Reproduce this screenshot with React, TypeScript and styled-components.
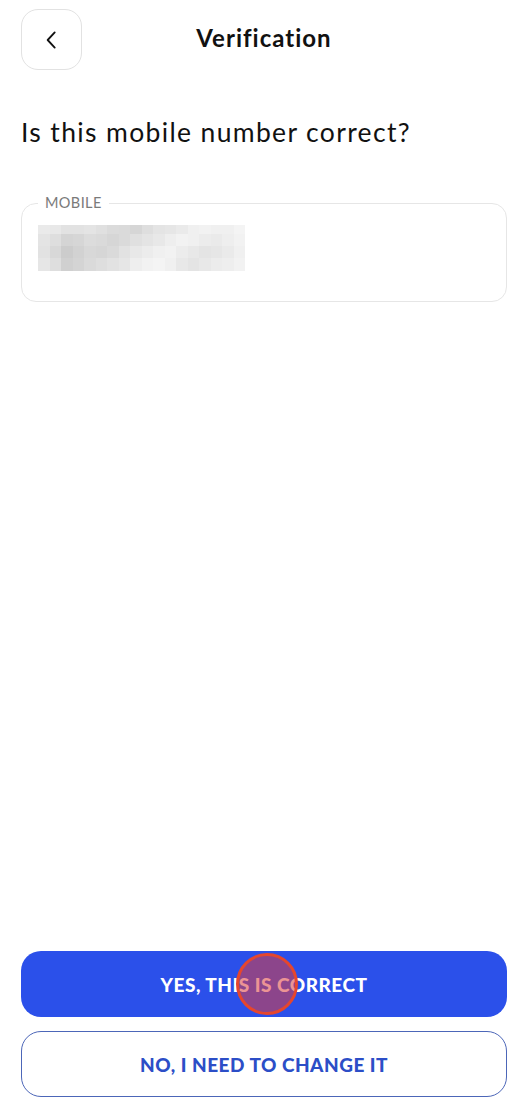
import * as React from "react";
import styled, { createGlobalStyle } from "styled-components";

const GlobalStyle = createGlobalStyle`
  html, body {
    margin: 0;
    padding: 0;
    background: #ffffff;
  }
  body {
    font-family: "Lato", "Open Sans", sans-serif;
    color: #111111;
  }
`;

const Screen = styled.div`
  width: 528px;
  height: 1118px;
  display: flex;
  flex-direction: column;
  padding: 9px 21px 21px;
  box-sizing: border-box;
  background: #ffffff;
`;

const Header = styled.div`
  position: relative;
  display: flex;
  align-items: center;
  height: 61px;
`;

const BackButton = styled.button`
  width: 61px;
  height: 61px;
  border: 1px solid #e2e2e2;
  border-radius: 17px;
  background: #ffffff;
  display: flex;
  align-items: center;
  justify-content: center;
  padding: 0;
`;

const Title = styled.h1`
  position: absolute;
  left: 0;
  right: 0;
  top: 14px;
  margin: 0;
  text-align: center;
  font-size: 24px;
  line-height: 30px;
  font-weight: 700;
  letter-spacing: 1px;
  pointer-events: none;
`;

const Question = styled.h2`
  margin: 46px 0 0;
  font-size: 26.5px;
  font-weight: 400;
  line-height: 32px;
  letter-spacing: 1.35px;
  color: #111111;
`;

const Field = styled.fieldset`
  margin: 48px 0 0;
  padding: 0 16px 0 16px;
  height: 106px;
  box-sizing: border-box;
  border: 1.5px solid #e6e6e6;
  border-radius: 15px;
  min-width: 0;
`;

const Legend = styled.legend`
  padding: 0 7px;
  margin-left: 0;
  font-size: 14.5px;
  letter-spacing: 0.4px;
  color: #7a7a7a;
  line-height: 14px;
`;

const Pixelated = styled.div`
  margin-top: 15px;
  display: grid;
  grid-template-columns: repeat(18, 11.5px);
  grid-template-rows: 9px 12px 12px 13px;
  width: fit-content;
`;

const Cell = styled.div<{ $shade: number }>`
  background: ${(p) => `rgb(${p.$shade}, ${p.$shade}, ${p.$shade})`};
`;

const Spacer = styled.div`
  flex: 1;
`;

const Actions = styled.div`
  display: flex;
  flex-direction: column;
  gap: 14px;
`;

const ActionButton = styled.button<{ $primary?: boolean }>`
  position: relative;
  height: 66px;
  border-radius: 20px;
  font-family: "Lato", "Open Sans", sans-serif;
  font-size: 19px;
  font-weight: 900;
  letter-spacing: 0.5px;
  cursor: pointer;
  background: ${(p) => (p.$primary ? "#2b50ea" : "#ffffff")};
  color: ${(p) => (p.$primary ? "#ffffff" : "#2c4ec7")};
  border: ${(p) => (p.$primary ? "none" : "1.5px solid #4c66b8")};
`;

const TapMarker = styled.span`
  position: absolute;
  left: 215px;
  top: 2px;
  width: 62px;
  height: 62px;
  border-radius: 50%;
  border: 3px solid #e5462e;
  box-sizing: border-box;
  background: rgba(220, 60, 60, 0.55);
`;

const shades = [
  [234, 232, 226, 226, 228, 224, 219, 218, 214, 222, 228, 230, 234, 240, 242, 240, 240, 244],
  [228, 222, 212, 214, 220, 218, 214, 218, 224, 228, 232, 238, 242, 240, 236, 234, 238, 242],
  [226, 216, 204, 210, 216, 214, 218, 226, 232, 236, 240, 242, 236, 232, 228, 230, 234, 240],
  [230, 222, 208, 212, 218, 222, 226, 230, 238, 242, 244, 240, 232, 228, 232, 236, 238, 242],
];

const ChevronLeft = () => (
  <svg width="26" height="26" viewBox="0 0 24 24" fill="none">
    <path d="M14.5 5L8 12l6.5 7" stroke="#111" strokeWidth="1.7" strokeLinecap="round" strokeLinejoin="round" />
  </svg>
);

const App: React.FC = () => {
  return (
    <>
      <GlobalStyle />
      <Screen>
        <Header>
          <BackButton aria-label="Back">
            <ChevronLeft />
          </BackButton>
          <Title>Verification</Title>
        </Header>
        <Question>Is this mobile number correct?</Question>
        <Field>
          <Legend>MOBILE</Legend>
          <Pixelated>
            {shades.flatMap((row, r) =>
              row.map((s, c) => <Cell key={`${r}-${c}`} $shade={s} />)
            )}
          </Pixelated>
        </Field>
        <Spacer />
        <Actions>
          <ActionButton $primary>
            YES, THIS IS CORRECT
            <TapMarker />
          </ActionButton>
          <ActionButton>NO, I NEED TO CHANGE IT</ActionButton>
        </Actions>
      </Screen>
    </>
  );
};

export default App;
